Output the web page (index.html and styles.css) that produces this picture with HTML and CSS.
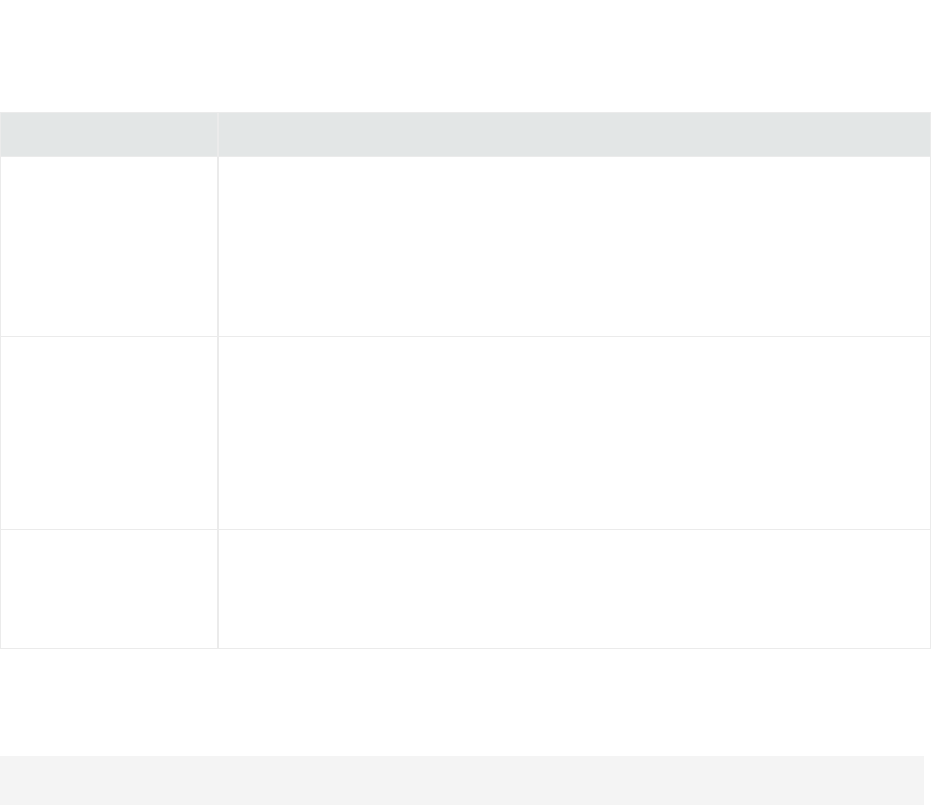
FILE: index.html
```html
<!DOCTYPE html>
<html>
<head>
<meta charset="utf-8">
<link rel="stylesheet" href="styles.css">
</head>
<body>
<div class="page">
  <table class="grid">
    <thead>
      <tr class="head"><th class="c1"></th><th class="c2"></th></tr>
    </thead>
    <tbody>
      <tr class="r1"><td class="c1"></td><td class="c2"></td></tr>
      <tr class="r2"><td class="c1"></td><td class="c2"></td></tr>
      <tr class="r3"><td class="c1"></td><td class="c2"></td></tr>
    </tbody>
  </table>
  <div class="footer-box"></div>
</div>
</body>
</html>
```
FILE: styles.css
```css
html, body {
  margin: 0;
  padding: 0;
  background: #ffffff;
  font-family: "Open Sans", "Liberation Sans", sans-serif;
}
.page {
  padding-top: 112px;
  width: 931px;
}
.grid {
  width: 931px;
  border-collapse: collapse;
  border: 1px solid #ebebeb;
  table-layout: fixed;
}
.grid th, .grid td {
  padding: 0;
  border-top: 1px solid #ebebeb;
  border-bottom: 1px solid #ebebeb;
}
.grid .c1 {
  width: 216px;
  border-right: 2px solid #ebebeb;
}
.head th {
  background: #e3e6e6;
  height: 43px;
}
.r1 td { height: 179px; }
.r2 td { height: 192px; }
.r3 td { height: 118px; }
.footer-box {
  margin-top: 107px;
  width: 924px;
  height: 60px;
  background: #f4f4f4;
}
```
